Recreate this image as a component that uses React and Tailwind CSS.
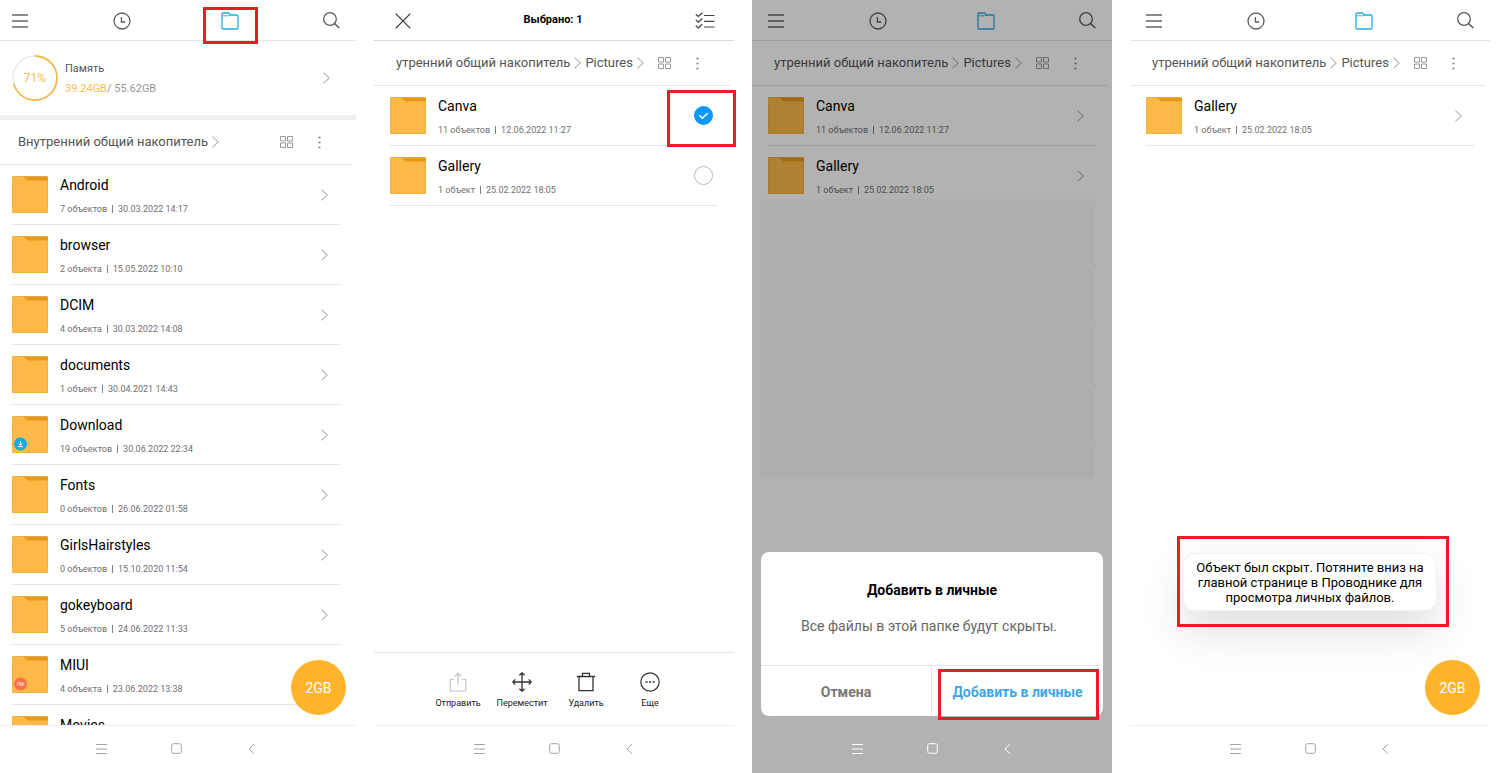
import React, { useState } from 'react';

const ROOT_FOLDERS = [
    { name: 'Android', count: '7 объектов', date: '30.03.2022 14:17' },
    { name: 'browser', count: '2 объекта', date: '15.05.2022 10:10' },
    { name: 'DCIM', count: '4 объекта', date: '30.03.2022 14:08' },
    { name: 'documents', count: '1 объект', date: '30.04.2021 14:43' },
    { name: 'Download', count: '19 объектов', date: '30.06.2022 22:34', badge: 'download' },
    { name: 'Fonts', count: '0 объектов', date: '26.06.2022 01:58' },
    { name: 'GirlsHairstyles', count: '0 объектов', date: '15.10.2020 11:54' },
    { name: 'gokeyboard', count: '5 объектов', date: '24.06.2022 11:33' },
    { name: 'MIUI', count: '4 объекта', date: '23.06.2022 13:38', badge: 'miui' },
    { name: 'Movies' },
];

const CANVA = { name: 'Canva', count: '11 объектов', date: '12.06.2022 11:27' };
const GALLERY = { name: 'Gallery', count: '1 объект', date: '25.02.2022 18:05' };

// ICONS
const MenuIcon = () => (
    <svg width="16" height="14" viewBox="0 0 16 14" fill="none" stroke="#666" strokeWidth="1.3">
        <path d="M0 1h16M0 7h16M0 13h16" />
    </svg>
);

const ClockIcon = () => (
    <svg width="18" height="18" viewBox="0 0 18 18" fill="none" stroke="#5c5c5c" strokeWidth="1.3">
        <circle cx="9" cy="9" r="8" />
        <path d="M8.4 5v5h3.8" />
    </svg>
);

const TabFolderIcon = () => (
    <svg width="18" height="18" viewBox="0 0 18 18" fill="none" stroke="#29abe2" strokeWidth="1.3" strokeLinejoin="round">
        <path d="M1 2V16a1 1 0 0 0 1 1h14a1 1 0 0 0 1-1V4a1 1 0 0 0-1-1H9.5L7.6 1H2a1 1 0 0 0-1 1z" />
        <path d="M1 3.8h6.5L9.5 3" strokeWidth="0.9" />
    </svg>
);

const SearchIcon = () => (
    <svg width="17" height="17" viewBox="0 0 17 17" fill="none" stroke="#5c5c5c" strokeWidth="1.3">
        <circle cx="7" cy="7" r="6.3" />
        <path d="M11.5 11.5l4.8 4.5" strokeWidth="1.7" />
    </svg>
);

const Chevron = () => (
    <svg className="shrink-0" width="7" height="12" viewBox="0 0 7 12" fill="none" stroke="#b3b3b3" strokeWidth="1.1">
        <path d="M0.5 0.6L6.3 6L0.5 11.4" />
    </svg>
);

const GridIcon = () => (
    <svg width="13" height="12" viewBox="0 0 13 12" fill="none" stroke="#999" strokeWidth="1">
        <path d="M0.5 0.5h5v4.5h-5zM7.5 0.5h5v4.5h-5zM0.5 7h5v4.5h-5zM7.5 7h5v4.5h-5z" />
    </svg>
);

const DotsIcon = () => (
    <svg width="3" height="13" viewBox="0 0 3 13" fill="#888">
        <circle cx="1.5" cy="1.5" r="1.1" />
        <circle cx="1.5" cy="6.5" r="1.1" />
        <circle cx="1.5" cy="11.5" r="1.1" />
    </svg>
);

const FolderIcon = ({ badge }) => (
    <svg className="shrink-0" width="36" height="37" viewBox="0 0 36 37">
        <rect width="36" height="37" rx="1.5" fill="#e8991c" />
        <path d="M0 2a1.5 1.5 0 0 1 1.5-1.5H11L15.5 4.4H36V35.5a1.5 1.5 0 0 1-1.5 1.5H1.5A1.5 1.5 0 0 1 0 35.5z" fill="#fcb947" />
        <path d="M0.5 0.5h35" stroke="#e0b050" strokeWidth="0.8" />
        <path d="M0.3 2v33.5M35.7 5v30.5M1 36.6h34" stroke="#eeab3d" strokeWidth="0.7" />
        {badge === 'download' && (
            <g>
                <circle cx="8.5" cy="28" r="6.5" fill="#06aee4" />
                <path d="M8.5 25v4M6.8 27.6l1.7 1.7l1.7-1.7M6 30.6h5" fill="none" stroke="#fff" strokeWidth="1" />
            </g>
        )}
        {badge === 'miui' && (
            <g>
                <circle cx="8.5" cy="28" r="6.5" fill="#fb6f4a" />
                <path d="M5.5 29.5v-3h1.8v3M7.3 26.5h1v3M9.4 26.5v3h1.2v-3M11.8 26.5v3" fill="none" stroke="#ffd9ce" strokeWidth="0.8" />
            </g>
        )}
    </svg>
);

const CloseIcon = () => (
    <svg width="16" height="16" viewBox="0 0 16 16" fill="none" stroke="#333" strokeWidth="1.2">
        <path d="M0.7 0.7l14.6 14.6M15.3 0.7L0.7 15.3" />
    </svg>
);

const SelectAllIcon = () => (
    <svg width="20" height="17" viewBox="0 0 20 17" fill="none" stroke="#444" strokeWidth="1.2">
        <path d="M9 3.5h10.5M9 9.3h10.5M9 15h10.5" />
        <path d="M0.8 2.2l2.5 2.3L7.3 0.7M0.8 8l2.5 2.3l4-3.8M0.8 13.7l2.5 2.3l4-3.8" />
    </svg>
);

const ShareIcon = () => (
    <svg width="20" height="20" viewBox="0 0 20 20" fill="none" stroke="#c4c4c4" strokeWidth="1.2">
        <path d="M6 7.5H2.2V18a1 1 0 0 0 1 1h13.6a1 1 0 0 0 1-1V7.5H14M10 12.5V1.2M6.7 4.5L10 1.2l3.3 3.3" />
    </svg>
);

const MoveIcon = () => (
    <svg width="20" height="20" viewBox="0 0 20 20" fill="none" stroke="#333" strokeWidth="1.3">
        <path d="M10 0.8v18.4M0.8 10h18.4M7.4 3.2L10 0.8l2.6 2.4M7.4 16.8l2.6 2.4l2.6-2.4M3.2 7.4L0.8 10l2.4 2.6M16.8 7.4l2.4 2.6l-2.4 2.6" />
    </svg>
);

const TrashIcon = () => (
    <svg width="20" height="20" viewBox="0 0 20 20" fill="none" stroke="#333" strokeWidth="1.3">
        <path d="M0.8 4.5h18.4M3 4.5V18.7h14V4.5M6.5 4.5V1.3h7v3.2" />
    </svg>
);

const MoreIcon = () => (
    <svg width="20" height="20" viewBox="0 0 20 20" fill="none" stroke="#333" strokeWidth="1.2">
        <circle cx="10" cy="10" r="9.2" />
        <path d="M5.5 10h2M9 10h2M12.5 10h2" strokeWidth="1.6" />
    </svg>
);

const ACTIONS = [
    { label: 'Отправить', Icon: ShareIcon },
    { label: 'Переместит', Icon: MoveIcon },
    { label: 'Удалить', Icon: TrashIcon },
    { label: 'Еще', Icon: MoreIcon },
];

// Red frame drawn over a control
const Frame = ({ className }) => (
    <span className={`absolute z-20 border-3 border-[#ed1c24] pointer-events-none ${className}`} />
);

function TopBar({ framed }) {
    return (
        <header className="h-[41px] shrink-0 pt-px flex items-center border-b border-[#e6e6e6]">
            <button aria-label="Меню" className="w-1/5 pl-4 flex"><MenuIcon /></button>
            <button aria-label="Недавние" className="flex-1 flex justify-center"><ClockIcon /></button>
            <button aria-label="Хранилище" className="relative flex-1 self-stretch flex items-center justify-center">
                <TabFolderIcon />
                {framed && <Frame className="top-1.5 w-[55px] h-[37px]" />}
            </button>
            <button aria-label="Поиск" className="w-1/5 pr-4 flex justify-end"><SearchIcon /></button>
        </header>
    );
}

function Breadcrumbs({ path }) {
    return (
        <div className="h-[45px] shrink-0 mr-1 pl-[22px] pr-[31px] flex items-center border-b border-[#e6e6e6] text-[13px] text-[#555]">
            <nav className="flex-1 flex items-center">
                {path.map((part) => (
                    <React.Fragment key={part}>
                        <a href="#" className="whitespace-nowrap">{part}</a>
                        <span className="px-1"><Chevron /></span>
                    </React.Fragment>
                ))}
            </nav>
            <button aria-label="Сетка" className="mr-[25px]"><GridIcon /></button>
            <button aria-label="Ещё"><DotsIcon /></button>
        </div>
    );
}

function FolderInfo({ folder }) {
    return (
        <>
            <FolderIcon badge={folder.badge} />
            <span className="flex-1 flex flex-col gap-2 pl-3 text-left">
                <span className="text-sm leading-5 text-black">{folder.name}</span>
                <span className="h-3 flex items-center text-[9px] leading-3 text-[#707070]">
                    {folder.count && (
                        <>
                            {folder.count}
                            <span className="mx-[5px] w-px h-2 bg-[#808080]" />
                            {folder.date}
                        </>
                    )}
                </span>
            </span>
        </>
    );
}

function FolderRow({ folder }) {
    return (
        <li className="mx-4 border-b border-[#e6e6e6]">
            <button className="w-full h-[59px] pr-3 flex items-center">
                <FolderInfo folder={folder} />
                <Chevron />
            </button>
        </li>
    );
}

function SelectableRow({ folder, checked, onToggle, framed }) {
    return (
        <li className="mx-4 border-b border-[#e6e6e6]">
            <label className="relative h-[59px] pr-[5px] flex items-center cursor-pointer">
                <FolderInfo folder={folder} />
                <span className="relative flex">
                    <input
                        type="checkbox"
                        checked={checked}
                        onChange={onToggle}
                        className="appearance-none w-[19px] h-[19px] rounded-full border border-[#b8b8b8] checked:border-[#0a98fc] checked:bg-[#0a98fc]"
                    />
                    {checked && (
                        <svg className="absolute inset-0 pointer-events-none" width="19" height="19" viewBox="0 0 19 19" fill="none" stroke="#fff" strokeWidth="1.5">
                            <path d="M5.3 9.3l3 3l5.4-5" />
                        </svg>
                    )}
                </span>
                {framed && <Frame className="top-1 -right-[18px] w-[69px] h-[57px]" />}
            </label>
        </li>
    );
}

function SystemNav({ light }) {
    return (
        <nav className={`h-12 shrink-0 pb-0.5 flex items-center justify-center gap-16 border-t ${light ? 'text-white border-transparent' : 'text-[#a3a3a3] border-[#ededed]'}`}>
            <button aria-label="Приложения">
                <svg width="11" height="10" viewBox="0 0 11 10" stroke="currentColor" strokeWidth="1">
                    <path d="M0 0.5h11M0 5h11M0 9.5h11" />
                </svg>
            </button>
            <button aria-label="Домой">
                <svg width="11" height="11" viewBox="0 0 11 11" fill="none" stroke="currentColor" strokeWidth="1">
                    <rect x="0.7" y="0.7" width="9.6" height="9.6" rx="1.8" />
                </svg>
            </button>
            <button aria-label="Назад">
                <svg width="11" height="10" viewBox="0 0 11 10" fill="none" stroke="currentColor" strokeWidth="1">
                    <path d="M8 0.3L3 5l5 4.7" />
                </svg>
            </button>
        </nav>
    );
}

function StorageCard() {
    return (
        <button className="w-full h-[79px] shrink-0 pl-4 pr-[26px] flex items-center text-left text-[11px] border-b-5 border-[#eee]">
            <span className="relative flex items-center justify-center text-xs text-[#f8bd55]">
                <svg width="46" height="46" viewBox="0 0 46 46" fill="none" strokeWidth="1.8">
                    <circle cx="23" cy="23" r="22" stroke="#ececec" />
                    <circle cx="23" cy="23" r="22" stroke="#f6bb50" pathLength="100" strokeDasharray="71 29" transform="rotate(-90 23 23)" />
                </svg>
                <span className="absolute">71%</span>
            </span>
            <span className="flex-1 pl-[7px] pt-px leading-5">
                <span className="block text-[#555]">Память</span>
                <span className="block text-[#999]"><span className="text-[#f8bd55]">39.24GB</span>/ 55.62GB</span>
            </span>
            <Chevron />
        </button>
    );
}

function CleanButton() {
    return (
        <button className="absolute right-[10px] bottom-[58px] w-[55px] h-[55px] rounded-full bg-[#ffb42b] text-white text-sm">
            2GB
        </button>
    );
}

function Screen({ children }) {
    return <div className="relative h-screen flex flex-col bg-white">{children}</div>;
}

export default function App() {
    const [selected, setSelected] = useState({ Canva: true });
    const path = ['утренний общий накопитель', 'Pictures'];
    const toggle = (name) => setSelected(prev => ({ ...prev, [name]: !prev[name] }));
    const selectedCount = Object.values(selected).filter(Boolean).length;

    return (
        <main className="grid grid-cols-[minmax(0,356fr)_minmax(0,360fr)_minmax(0,360fr)_minmax(0,360fr)] gap-[18px] pr-1.5 bg-white font-['Roboto',sans-serif]">
            {/* STORAGE ROOT */}
            <section className="overflow-hidden">
                <div className="-ml-1">
                    <Screen>
                        <TopBar framed />
                        <StorageCard />
                        <Breadcrumbs path={['Внутренний общий накопитель']} />
                        <ul className="flex-1 min-h-0 overflow-hidden">
                            {ROOT_FOLDERS.map((f) => <FolderRow key={f.name} folder={f} />)}
                        </ul>
                        <SystemNav />
                        <CleanButton />
                    </Screen>
                </div>
            </section>

            {/* SELECTION MODE */}
            <section>
                <Screen>
                    <header className="h-[41px] shrink-0 pt-px pl-[21px] pr-[19px] flex items-center justify-between border-b border-[#d9d9d9]">
                        <button aria-label="Закрыть"><CloseIcon /></button>
                        <h1 className="text-[11px] font-bold text-black">Выбрано: {selectedCount}</h1>
                        <button aria-label="Выбрать все"><SelectAllIcon /></button>
                    </header>
                    <Breadcrumbs path={path} />
                    <ul className="flex-1">
                        <SelectableRow folder={CANVA} checked={!!selected.Canva} onToggle={() => toggle('Canva')} framed />
                        <SelectableRow folder={GALLERY} checked={!!selected.Gallery} onToggle={() => toggle('Gallery')} />
                    </ul>
                    <div className="h-[73px] shrink-0 pt-0.5 flex items-center justify-center border-t border-[#e6e6e6]">
                        {ACTIONS.map(({ label, Icon }) => (
                            <button key={label} className="w-16 flex flex-col items-center gap-[5px] text-[9px] leading-3 text-[#222]">
                                <Icon />
                                {label}
                            </button>
                        ))}
                    </div>
                    <SystemNav />
                </Screen>
            </section>

            {/* CONFIRM DIALOG */}
            <section>
                <Screen>
                    <TopBar />
                    <Breadcrumbs path={path} />
                    <ul className="flex-1">
                        <FolderRow folder={CANVA} />
                        <FolderRow folder={GALLERY} />
                        {[0, 1, 2, 3].map((i) => <li key={i} className="h-[60px] mx-4 border-b border-[#e6e6e6]" />)}
                    </ul>
                    <div className="absolute inset-0 flex flex-col bg-black/30">
                        <div className="mt-[199px] ml-[9px] mr-[18px] h-[279px] bg-[#aeaeae]" />
                        <div role="dialog" aria-label="Добавить в личные" className="mt-auto mb-[9px] mx-[9px] rounded-lg bg-white text-sm">
                            <h2 className="pt-7 text-center font-bold text-black">Добавить в личные</h2>
                            <p className="pt-4 pb-[29px] pl-10 text-[#666]">Все файлы в этой папке будут скрыты.</p>
                            <div className="h-[51px] grid grid-cols-2 border-t border-[#e6e6e6] font-bold">
                                <button className="pt-0.5 border-r border-[#e6e6e6] text-[#777]">Отмена</button>
                                <button className="relative pt-0.5 text-[#3ba7e8]">
                                    Добавить в личные
                                    <Frame className="top-[3px] right-1 w-[161px] h-[51px]" />
                                </button>
                            </div>
                        </div>
                        <SystemNav light />
                    </div>
                </Screen>
            </section>

            {/* RESULT */}
            <section>
                <Screen>
                    <TopBar />
                    <Breadcrumbs path={path} />
                    <ul className="flex-1">
                        <FolderRow folder={GALLERY} />
                    </ul>
                    <SystemNav />
                    <CleanButton />
                    <div role="status" className="absolute bottom-[162px] inset-x-[53px] h-[58px] flex items-center justify-center rounded-xl border border-[#f2f2f2] bg-white text-center text-[13px] leading-[15px] text-black shadow-[0_20px_44px_rgba(0,0,0,0.13)]">
                        Объект был скрыт. Потяните вниз на<br />
                        главной странице в Проводнике для<br />
                        просмотра личных файлов.
                        <Frame className="-top-[18px] -left-[7px] -right-[13px] -bottom-[17px]" />
                    </div>
                </Screen>
            </section>
        </main>
    );
}
